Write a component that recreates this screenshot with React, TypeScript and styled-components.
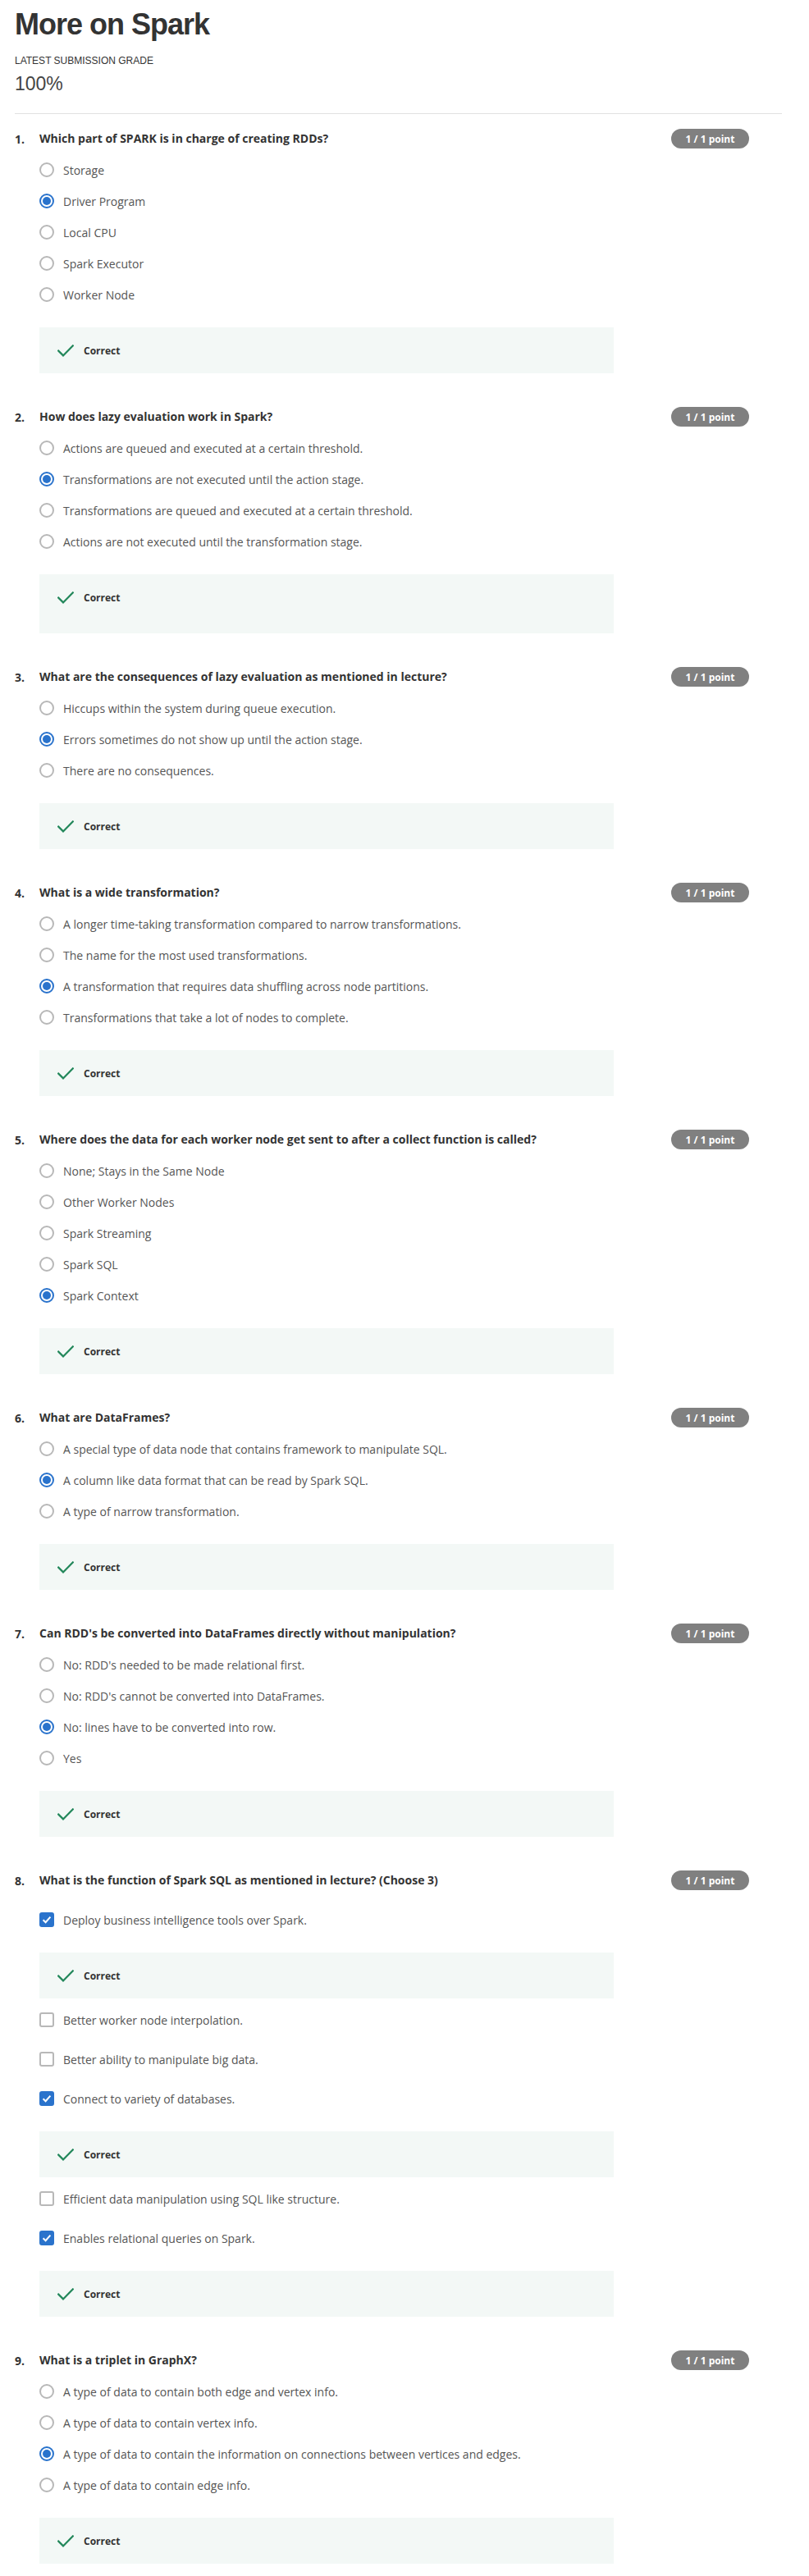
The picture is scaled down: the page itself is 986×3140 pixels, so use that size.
import React from 'react';
import styled, { createGlobalStyle } from 'styled-components';

const GlobalStyle = createGlobalStyle`
  html, body { margin: 0; padding: 0; background: #fff; }
  body { font-family: "Open Sans", "Liberation Sans", sans-serif; color: #333; }
  * { box-sizing: border-box; }
`;

const Page = styled.main`
  width: 953px;
  padding: 10px 0 12px 18px;
`;

const Title = styled.h1`
  margin: 0;
  font-family: "Liberation Sans", Arial, sans-serif;
  font-size: 36px;
  line-height: 40px;
  font-weight: 700;
  letter-spacing: -1px;
  color: #333;
`;

const GradeLabel = styled.div`
  margin-top: 17px;
  font-family: "Liberation Sans", Arial, sans-serif;
  font-size: 12px;
  line-height: 14px;
  color: #333;
  text-transform: uppercase;
`;

const GradeValue = styled.div`
  margin-top: 7px;
  font-family: "Liberation Sans", Arial, sans-serif;
  font-size: 23px;
  line-height: 28px;
  color: #444;
`;

const Divider = styled.hr`
  margin: 22px 0 18px;
  border: 0;
  border-top: 1px solid #e1e1e1;
  height: 0;
`;

const QuestionList = styled.ol`
  list-style: none;
  margin: 0;
  padding: 0;
  display: flex;
  flex-direction: column;
  gap: 41px;
`;

const QuestionItem = styled.li`
  display: flex;
  flex-direction: column;
`;

const QuestionHeader = styled.div`
  display: flex;
  align-items: center;
  height: 24px;
  padding-right: 40px;
`;

const QNumber = styled.span`
  flex: none;
  width: 30px;
  font-size: 14px;
  font-weight: 700;
  color: #333;
`;

const QText = styled.h3`
  flex: 1;
  margin: 0;
  font-size: 14px;
  line-height: 20px;
  font-weight: 700;
  color: #333;
`;

const PointBadge = styled.span`
  flex: none;
  width: 95px;
  height: 24px;
  border-radius: 12px;
  background: #808080;
  color: #fff;
  font-size: 12px;
  font-weight: 700;
  display: flex;
  align-items: center;
  justify-content: center;
`;

const Body = styled.div`
  margin: 7px 0 0 30px;
  display: flex;
  flex-direction: column;
`;

const Feedback = styled.div<{ $tall?: boolean }>`
  width: 700px;
  margin-top: 21px;
  padding: 18px 22px ${(p) => (p.$tall ? 34 : 18)}px;
  background: #f3f8f6;
`;

const FeedbackLine = styled.div`
  display: flex;
  align-items: center;
  gap: 12px;
  height: 20px;
  font-size: 12px;
  font-weight: 700;
  color: #333;
`;

const OptionRow = styled.label<{ $check?: boolean }>`
  display: flex;
  align-items: center;
  height: 38px;
  margin-top: ${(p) => (p.$check ? 10 : 0)}px;
  font-size: 14px;
  color: #555;
  ${Feedback} + & {
    margin-top: 7px;
  }
`;

const Radio = styled.span<{ $on: boolean }>`
  flex: none;
  width: 18px;
  height: 18px;
  margin-right: 11px;
  border-radius: 50%;
  border: 2px solid ${(p) => (p.$on ? '#2a73cc' : '#b8b8b8')};
  display: flex;
  align-items: center;
  justify-content: center;
  &::after {
    content: '';
    width: 10px;
    height: 10px;
    border-radius: 50%;
    background: ${(p) => (p.$on ? '#2a73cc' : 'transparent')};
  }
`;

const Checkbox = styled.span<{ $on: boolean }>`
  flex: none;
  width: 18px;
  height: 18px;
  margin-right: 11px;
  border-radius: 3px;
  border: 2px solid ${(p) => (p.$on ? '#2a73cc' : '#b8b8b8')};
  background: ${(p) => (p.$on ? '#2a73cc' : '#fff')};
  display: flex;
  align-items: center;
  justify-content: center;
`;

const GreenCheck = () => (
  <svg width="20" height="15" viewBox="0 0 20 15" fill="none">
    <path d="M1.2 7.6 L7 13.4 L18.8 1.4" stroke="#22875a" strokeWidth="2.2" strokeLinecap="square" />
  </svg>
);

const WhiteCheck = () => (
  <svg width="12" height="12" viewBox="0 0 12 12" fill="none">
    <path d="M1.6 6.2 L4.6 9.2 L10.4 2.6" stroke="#fff" strokeWidth="2" />
  </svg>
);

type Q = {
  text: string;
  options: string[];
  answer: number[];
  type?: 'radio' | 'check';
  tall?: boolean;
};

const questions: Q[] = [
  {
    text: 'Which part of SPARK is in charge of creating RDDs?',
    options: ['Storage', 'Driver Program', 'Local CPU', 'Spark Executor', 'Worker Node'],
    answer: [1],
  },
  {
    text: 'How does lazy evaluation work in Spark?',
    options: [
      'Actions are queued and executed at a certain threshold.',
      'Transformations are not executed until the action stage.',
      'Transformations are queued and executed at a certain threshold.',
      'Actions are not executed until the transformation stage.',
    ],
    answer: [1],
    tall: true,
  },
  {
    text: 'What are the consequences of lazy evaluation as mentioned in lecture?',
    options: [
      'Hiccups within the system during queue execution.',
      'Errors sometimes do not show up until the action stage.',
      'There are no consequences.',
    ],
    answer: [1],
  },
  {
    text: 'What is a wide transformation?',
    options: [
      'A longer time-taking transformation compared to narrow transformations.',
      'The name for the most used transformations.',
      'A transformation that requires data shuffling across node partitions.',
      'Transformations that take a lot of nodes to complete.',
    ],
    answer: [2],
  },
  {
    text: 'Where does the data for each worker node get sent to after a collect function is called?',
    options: ['None; Stays in the Same Node', 'Other Worker Nodes', 'Spark Streaming', 'Spark SQL', 'Spark Context'],
    answer: [4],
  },
  {
    text: 'What are DataFrames?',
    options: [
      'A special type of data node that contains framework to manipulate SQL.',
      'A column like data format that can be read by Spark SQL.',
      'A type of narrow transformation.',
    ],
    answer: [1],
  },
  {
    text: "Can RDD's be converted into DataFrames directly without manipulation?",
    options: [
      "No: RDD's needed to be made relational first.",
      "No: RDD's cannot be converted into DataFrames.",
      'No: lines have to be converted into row.',
      'Yes',
    ],
    answer: [2],
  },
  {
    text: 'What is the function of Spark SQL as mentioned in lecture? (Choose 3)',
    options: [
      'Deploy business intelligence tools over Spark.',
      'Better worker node interpolation.',
      'Better ability to manipulate big data.',
      'Connect to variety of databases.',
      'Efficient data manipulation using SQL like structure.',
      'Enables relational queries on Spark.',
    ],
    answer: [0, 3, 5],
    type: 'check',
  },
  {
    text: 'What is a triplet in GraphX?',
    options: [
      'A type of data to contain both edge and vertex info.',
      'A type of data to contain vertex info.',
      'A type of data to contain the information on connections between vertices and edges.',
      'A type of data to contain edge info.',
    ],
    answer: [2],
  },
];

const CorrectBox = ({ tall }: { tall?: boolean }) => (
  <Feedback $tall={tall}>
    <FeedbackLine>
      <GreenCheck />
      <span>Correct</span>
    </FeedbackLine>
  </Feedback>
);

const Question = ({ q, index }: { q: Q; index: number }) => {
  const isCheck = q.type === 'check';
  return (
    <QuestionItem>
      <QuestionHeader>
        <QNumber>{index + 1}.</QNumber>
        <QText>{q.text}</QText>
        <PointBadge>1 / 1 point</PointBadge>
      </QuestionHeader>
      <Body>
        {q.options.map((opt, i) => {
          const on = q.answer.includes(i);
          return (
            <React.Fragment key={i}>
              <OptionRow $check={isCheck}>
                {isCheck ? (
                  <Checkbox $on={on}>{on && <WhiteCheck />}</Checkbox>
                ) : (
                  <Radio $on={on} />
                )}
                <span>{opt}</span>
              </OptionRow>
              {isCheck && on && <CorrectBox />}
            </React.Fragment>
          );
        })}
        {!isCheck && <CorrectBox tall={q.tall} />}
      </Body>
    </QuestionItem>
  );
};

export default function App() {
  return (
    <>
      <GlobalStyle />
      <Page>
        <Title>More on Spark</Title>
        <GradeLabel>Latest Submission Grade</GradeLabel>
        <GradeValue>100%</GradeValue>
        <Divider />
        <QuestionList>
          {questions.map((q, i) => (
            <Question key={i} q={q} index={i} />
          ))}
        </QuestionList>
      </Page>
    </>
  );
}
